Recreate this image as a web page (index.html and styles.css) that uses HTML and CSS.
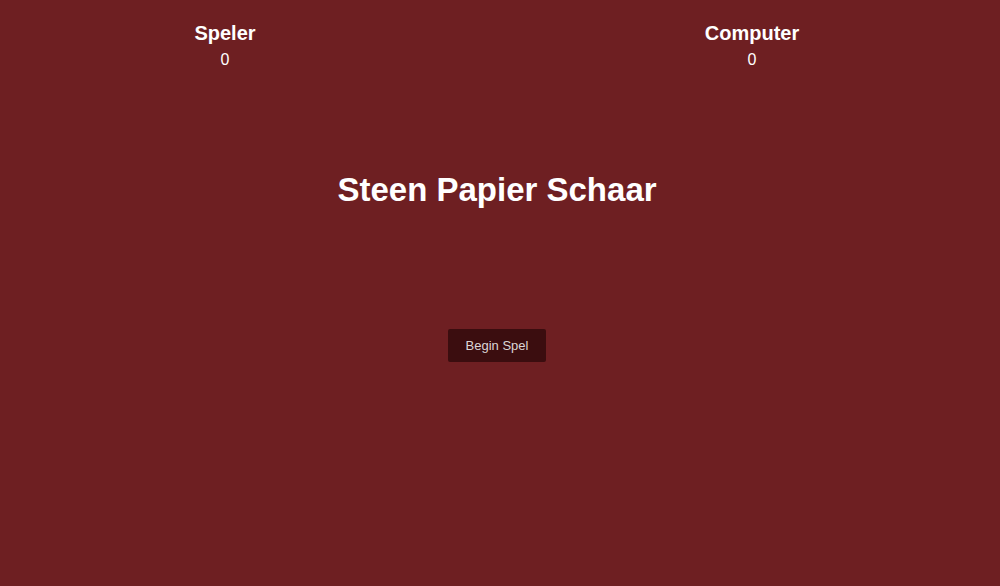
FILE: index.html
```html
<!DOCTYPE html>
<html lang="nl">
<head>
<meta charset="utf-8">
<title>Steen Papier Schaar</title>
<link rel="stylesheet" href="styles.css">
</head>
<body>
  <header class="scores">
    <div class="score score-player">
      <h2 class="score-name">Speler</h2>
      <p class="score-value">0</p>
    </div>
    <div class="score score-computer">
      <h2 class="score-name">Computer</h2>
      <p class="score-value">0</p>
    </div>
  </header>
  <main class="game">
    <h1 class="title">Steen Papier Schaar</h1>
    <button class="start-btn">Begin Spel</button>
  </main>
</body>
</html>
```

FILE: styles.css
```css
html, body {
  margin: 0;
  padding: 0;
  height: 100%;
}

body {
  background: #6e1f22;
  color: #ffffff;
  font-family: "Liberation Sans", Arial, Helvetica, sans-serif;
}

.scores {
  display: flex;
  gap: 54px;
  padding-top: 21px;
}

.score {
  text-align: center;
}

.score-player {
  width: 450px;
}

.score-computer {
  flex: 1;
}

.score-name {
  margin: 0;
  font-size: 20px;
  line-height: 24px;
  font-weight: 700;
}

.score-value {
  margin: 5px 0 0;
  font-size: 16px;
  line-height: 20px;
}

.game {
  display: flex;
  flex-direction: column;
  align-items: center;
  padding-right: 6px;
}

.title {
  margin: 100px 0 0;
  font-size: 33px;
  line-height: 40px;
  font-weight: 700;
}

.start-btn {
  margin-top: 119px;
  width: 98px;
  height: 33px;
  padding: 0;
  border: none;
  border-radius: 2px;
  background: #3b0d0f;
  color: #dcd6d6;
  font-family: "Liberation Sans", Arial, Helvetica, sans-serif;
  font-size: 13px;
  cursor: pointer;
}
```
